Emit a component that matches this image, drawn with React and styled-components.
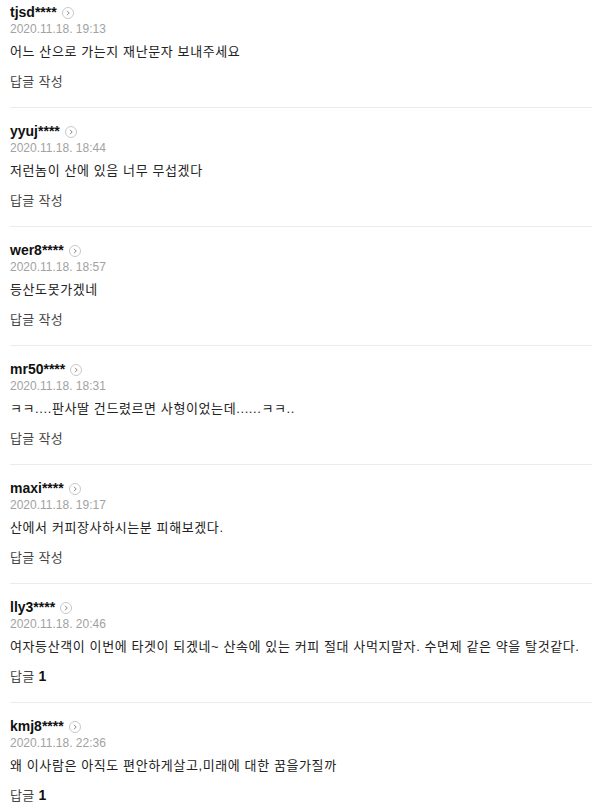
import styled, { createGlobalStyle } from "styled-components";

const Global = createGlobalStyle`
body{
    margin:0;
    background:#fff;
    font-family:"Liberation Sans","Noto Sans CJK KR",sans-serif;
}
`

const comments = [
    { id: "tjsd", time: "2020.11.18. 19:13", text: "어느 산으로 가는지 재난문자 보내주세요", replies: 0 },
    { id: "yyuj", time: "2020.11.18. 18:44", text: "저런놈이 산에 있음 너무 무섭겠다", replies: 0 },
    { id: "wer8", time: "2020.11.18. 18:57", text: "등산도못가겠네", replies: 0 },
    { id: "mr50", time: "2020.11.18. 18:31", text: "ㅋㅋ....판사딸 건드렸르면 사형이었는데......ㅋㅋ..", replies: 0 },
    { id: "maxi", time: "2020.11.18. 19:17", text: "산에서 커피장사하시는분 피해보겠다.", replies: 0 },
    { id: "lly3", time: "2020.11.18. 20:46", text: "여자등산객이 이번에 타겟이 되겠네~ 산속에 있는 커피 절대 사먹지말자. 수면제 같은 약을 탈것같다.", replies: 1 },
    { id: "kmj8", time: "2020.11.18. 22:36", text: "왜 이사람은 아직도 편안하게살고,미래에 대한 꿈을가질까", replies: 1 },
]

const Arrow = () => (
    <svg width="12" height="12" viewBox="0 0 12 12">
        <circle cx="6" cy="6" r="5.5" fill="none" stroke="#c8c8c8" />
        <path d="M5 3.8 L7.2 6 L5 8.2" fill="none" stroke="#888" strokeWidth="1" />
    </svg>
)

const App = () => {
    return (
        <>
            <Global />
            <List>
                {comments.map((c) => (
                    <Item key={c.id}>
                        <Head>
                            <Name>{c.id}****</Name>
                            <Arrow />
                        </Head>
                        <Date>{c.time}</Date>
                        <Text>{c.text}</Text>
                        <Reply>
                            답글 {c.replies > 0 ? <b>{c.replies}</b> : "작성"}
                        </Reply>
                    </Item>
                ))}
            </List>
        </>
    )
}

const List = styled.div`
margin-left:10px;
margin-top:-11px;
`
const Item = styled.div`
padding:15px 0 17px;
border-bottom:1px solid #ebebeb;
`
const Head = styled.div`
display:flex;
align-items:center;
gap:5px;
height:17px;
`
const Name = styled.span`
font-size:14px;
font-weight:bold;
color:#111;
line-height:17px;
`
const Date = styled.div`
font-size:12px;
color:#a2a2a2;
line-height:17px;
`
const Text = styled.div`
margin-top:5px;
font-size:13px;
letter-spacing:0.6px;
color:#222;
line-height:17px;
`
const Reply = styled.div`
margin-top:13px;
font-size:13px;
letter-spacing:0.3px;
color:#444;
line-height:17px;
b{
    color:#111;
    font-weight:bold;
    font-size:14px;
}
`

export default App
